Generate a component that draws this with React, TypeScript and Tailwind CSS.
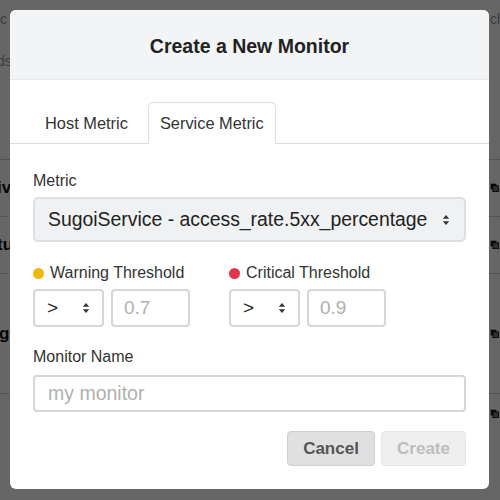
import React from "react";

const font = { fontFamily: '"Liberation Sans", Arial, Helvetica, sans-serif' };

function Arrows() {
  return (
    <svg width="8" height="12" viewBox="0 0 8 12" className="shrink-0">
      <path d="M4 1 L7.2 4.8 H0.8 Z" fill="#333" />
      <path d="M4 11 L7.2 7.2 H0.8 Z" fill="#333" />
    </svg>
  );
}

function CopyIcon() {
  return (
    <svg width="14" height="14" viewBox="0 0 14 14">
      <rect x="1" y="1" width="8" height="8" fill="#111" />
      <rect x="4" y="4" width="8" height="8" fill="#777" stroke="#111" strokeWidth="1.2" />
    </svg>
  );
}

function Threshold({ color, label, value }: { color: string; label: string; value: string }) {
  return (
    <div className="flex flex-col w-[157px]">
      <div className="flex items-center gap-[6px] h-[20px] text-[16px] text-[#333] whitespace-nowrap">
        <span className={`w-[11px] h-[11px] rounded-full shrink-0 ${color}`} />
        <span>{label}</span>
      </div>
      <div className="flex gap-[7px] mt-[6px]">
        <div className="flex items-center justify-between w-[71px] h-[38px] border-2 border-[#d6d6d6] rounded-[4px] pl-[12px] pr-[12px] text-[19px] text-[#222]">
          <span>&gt;</span>
          <Arrows />
        </div>
        <div className="flex items-center w-[79px] h-[38px] border-2 border-[#d6d6d6] rounded-[4px] pl-[11px] text-[19px] text-[#b0b0b0]">
          {value}
        </div>
      </div>
    </div>
  );
}

export default function App() {
  return (
    <div className="relative w-[500px] h-[500px] overflow-hidden bg-white" style={font}>
      {/* page behind the dialog */}
      <div className="absolute inset-0 flex justify-between">
        <div className="w-[10px] flex flex-col">
          <div className="h-[30px] flex items-end whitespace-nowrap text-[14px] text-[#999] -ml-[3px]">ic</div>
          <div className="h-[42px] flex items-end whitespace-nowrap text-[14px] text-[#999] -ml-[3px]">ds</div>
          <div className="h-[88px] w-[10px] border-b border-[#ccc]" />
          <div className="h-[57px] w-[10px] flex items-center whitespace-nowrap text-[17px] font-bold text-[#111] border-b border-[#ccc] -ml-[3px]">iv</div>
          <div className="h-[57px] w-[10px] flex items-center whitespace-nowrap text-[17px] font-bold text-[#111] border-b border-[#ccc] -ml-[3px]">tu</div>
          <div className="h-[120px] w-[10px] flex items-center whitespace-nowrap text-[17px] font-bold text-[#111] border-b border-[#ccc] -ml-[1px]">g</div>
        </div>
        <div className="w-[11px] flex flex-col">
          <div className="h-[30px] flex items-end whitespace-nowrap text-[14px] text-[#999] pl-[1px]">ch</div>
          <div className="h-[130px] w-[11px] border-b border-[#ccc]" />
          <div className="h-[57px] flex items-center pl-[1px] border-b border-[#ccc]"><CopyIcon /></div>
          <div className="h-[57px] flex items-center pl-[1px] border-b border-[#ccc]"><CopyIcon /></div>
          <div className="h-[120px] flex items-center pl-[1px] border-b border-[#ccc]"><CopyIcon /></div>
          <div className="h-[40px] flex items-center pl-[1px]"><CopyIcon /></div>
        </div>
      </div>
      <div className="absolute inset-0 bg-black/60" />

      {/* dialog */}
      <div className="absolute left-[10px] top-[10px] w-[479px] h-[479px] bg-white rounded-[6px] overflow-hidden">
        <div className="h-[70px] pt-[5px] bg-[#f3f4f6] border-b border-[#e8e8e8] flex items-center justify-center">
          <h2 className="text-[19.5px] font-bold text-[#222]">Create a New Monitor</h2>
        </div>

        <div className="pt-[22px]">
          <div className="flex items-end gap-[8px] pl-[23px] border-b border-[#dcdcdc] h-[42px]">
            <div className="h-[41px] flex items-center px-[12px] pt-[1px] text-[16.4px] text-[#333]">Host Metric</div>
            <div className="h-[42px] -mb-px flex items-center px-[11px] pt-[1px] text-[16.4px] text-[#333] bg-white border border-[#dcdcdc] border-b-white rounded-t-[5px]">
              Service Metric
            </div>
          </div>
        </div>

        <div className="flex flex-col px-[23px] pt-[27px]">
          <div className="h-[20px] flex items-center text-[16px] text-[#333]">Metric</div>
          <div className="mt-[6px] h-[45px] flex items-center justify-between bg-[#f0f1f3] border-2 border-[#dedfe1] rounded-[5px] pl-[13px] pr-[14px] text-[19.4px] text-[#222] whitespace-nowrap">
            <span>SugoiService - access_rate.5xx_percentage</span>
            <Arrows />
          </div>

          <div className="mt-[21px] flex gap-[39px]">
            <Threshold color="bg-[#f2b807]" label="Warning Threshold" value="0.7" />
            <Threshold color="bg-[#e5354a]" label="Critical Threshold" value="0.9" />
          </div>

          <div className="mt-[20px] h-[20px] flex items-center text-[16px] text-[#333]">Monitor Name</div>
          <div className="mt-[8px] h-[37px] flex items-center border-2 border-[#d6d6d6] rounded-[4px] pl-[13px] text-[19.5px] text-[#b0b0b0]">
            my monitor
          </div>

          <div className="mt-[19px] flex justify-end gap-[6px]">
            <button className="w-[88px] h-[35px] rounded-[4px] bg-[#e0e0e0] border border-[#cfcfcf] text-[17px] font-bold text-[#555]">
              Cancel
            </button>
            <button className="w-[85px] h-[35px] rounded-[4px] bg-[#efefef] border border-[#e6e6e6] text-[17px] font-bold text-[#bdbdbd]">
              Create
            </button>
          </div>
        </div>
      </div>
    </div>
  );
}
